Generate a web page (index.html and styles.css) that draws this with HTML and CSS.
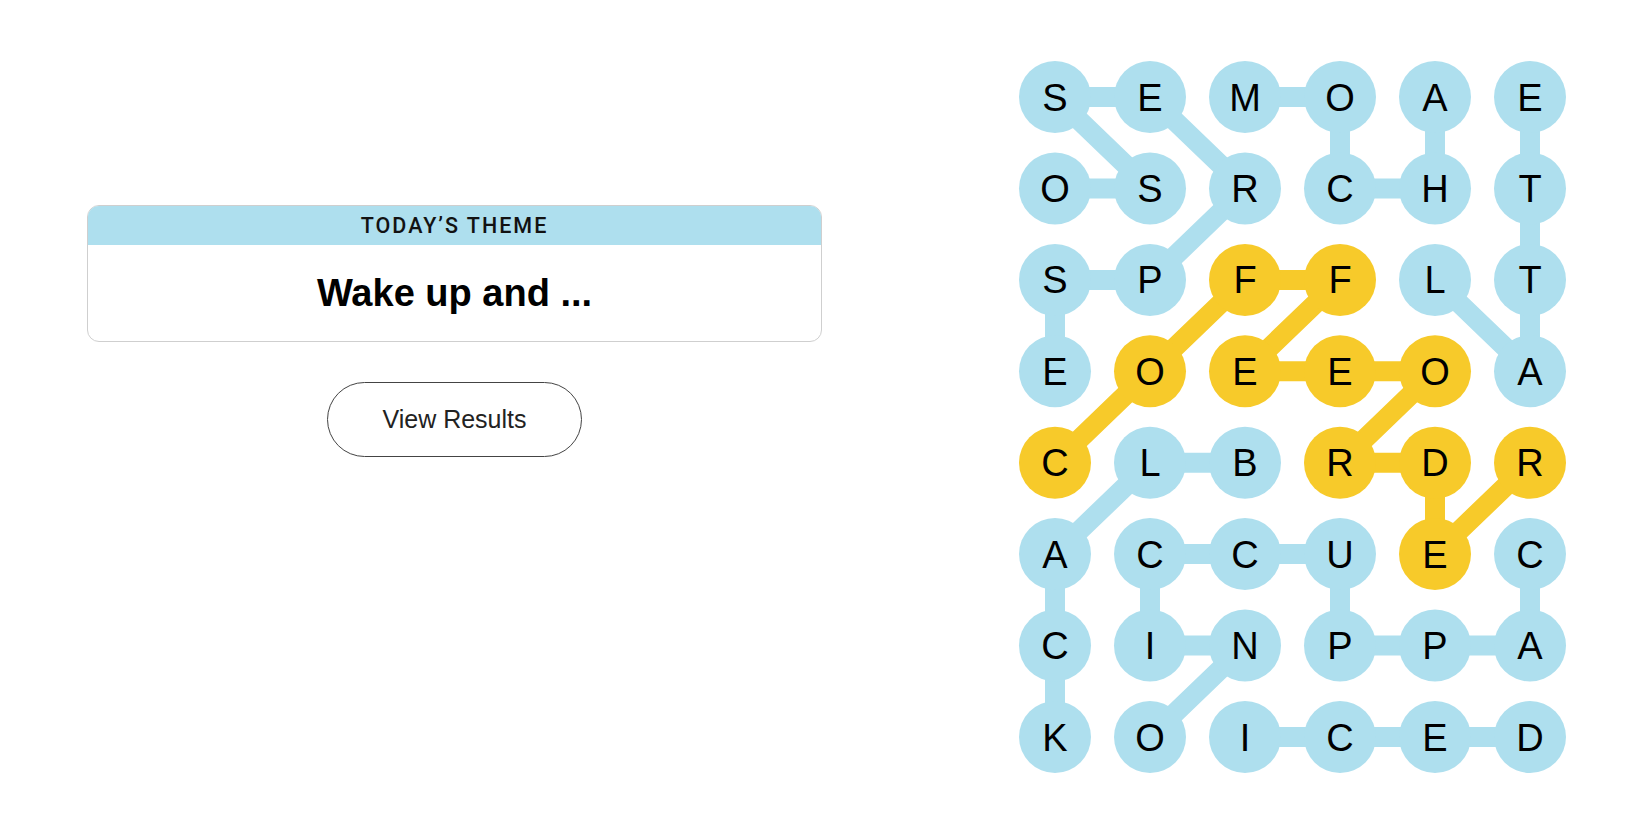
FILE: index.html
```html
<!DOCTYPE html>
<html lang="en">
<head>
<meta charset="utf-8">
<title>Strands</title>
<link rel="stylesheet" href="styles.css">
</head>
<body>
<main class="page">
  <section class="left">
    <div class="theme-card">
      <div class="theme-head">TODAY’S THEME</div>
      <div class="theme-body">Wake up and ...</div>
    </div>
    <button class="results-btn" type="button">View Results</button>
  </section>
  <section class="right">
    <svg class="board" width="560" height="720" viewBox="0 0 560 720" xmlns="http://www.w3.org/2000/svg">
      <g class="links blue">
        <polyline points="40,314.3 40,222.9 135,222.9 230,131.4 135,40 40,40 135,131.4 40,131.4"/>
        <polyline points="230,40 325,40 325,131.4 420,131.4 420,40"/>
        <polyline points="420,222.9 515,314.3 515,222.9 515,131.4 515,40"/>
        <polyline points="230,405.7 135,405.7 40,497.1 40,588.6 40,680"/>
        <polyline points="515,497.1 515,588.6 420,588.6 325,588.6 325,497.1 230,497.1 135,497.1 135,588.6 230,588.6 135,680"/>
        <polyline points="230,680 325,680 420,680 515,680"/>
      </g>
      <g class="links gold">
        <polyline points="40,405.7 135,314.3 230,222.9 325,222.9 230,314.3 325,314.3 420,314.3 325,405.7 420,405.7 420,497.1 515,405.7"/>
      </g>
      <g class="dots">
        <circle class="b" cx="40" cy="40" r="36"/><circle class="b" cx="135" cy="40" r="36"/><circle class="b" cx="230" cy="40" r="36"/><circle class="b" cx="325" cy="40" r="36"/><circle class="b" cx="420" cy="40" r="36"/><circle class="b" cx="515" cy="40" r="36"/>
        <circle class="b" cx="40" cy="131.4" r="36"/><circle class="b" cx="135" cy="131.4" r="36"/><circle class="b" cx="230" cy="131.4" r="36"/><circle class="b" cx="325" cy="131.4" r="36"/><circle class="b" cx="420" cy="131.4" r="36"/><circle class="b" cx="515" cy="131.4" r="36"/>
        <circle class="b" cx="40" cy="222.9" r="36"/><circle class="b" cx="135" cy="222.9" r="36"/><circle class="y" cx="230" cy="222.9" r="36"/><circle class="y" cx="325" cy="222.9" r="36"/><circle class="b" cx="420" cy="222.9" r="36"/><circle class="b" cx="515" cy="222.9" r="36"/>
        <circle class="b" cx="40" cy="314.3" r="36"/><circle class="y" cx="135" cy="314.3" r="36"/><circle class="y" cx="230" cy="314.3" r="36"/><circle class="y" cx="325" cy="314.3" r="36"/><circle class="y" cx="420" cy="314.3" r="36"/><circle class="b" cx="515" cy="314.3" r="36"/>
        <circle class="y" cx="40" cy="405.7" r="36"/><circle class="b" cx="135" cy="405.7" r="36"/><circle class="b" cx="230" cy="405.7" r="36"/><circle class="y" cx="325" cy="405.7" r="36"/><circle class="y" cx="420" cy="405.7" r="36"/><circle class="y" cx="515" cy="405.7" r="36"/>
        <circle class="b" cx="40" cy="497.1" r="36"/><circle class="b" cx="135" cy="497.1" r="36"/><circle class="b" cx="230" cy="497.1" r="36"/><circle class="b" cx="325" cy="497.1" r="36"/><circle class="y" cx="420" cy="497.1" r="36"/><circle class="b" cx="515" cy="497.1" r="36"/>
        <circle class="b" cx="40" cy="588.6" r="36"/><circle class="b" cx="135" cy="588.6" r="36"/><circle class="b" cx="230" cy="588.6" r="36"/><circle class="b" cx="325" cy="588.6" r="36"/><circle class="b" cx="420" cy="588.6" r="36"/><circle class="b" cx="515" cy="588.6" r="36"/>
        <circle class="b" cx="40" cy="680" r="36"/><circle class="b" cx="135" cy="680" r="36"/><circle class="b" cx="230" cy="680" r="36"/><circle class="b" cx="325" cy="680" r="36"/><circle class="b" cx="420" cy="680" r="36"/><circle class="b" cx="515" cy="680" r="36"/>
      </g>
      <g class="letters">
        <text x="40" y="53.5">S</text><text x="135" y="53.5">E</text><text x="230" y="53.5">M</text><text x="325" y="53.5">O</text><text x="420" y="53.5">A</text><text x="515" y="53.5">E</text>
        <text x="40" y="144.9">O</text><text x="135" y="144.9">S</text><text x="230" y="144.9">R</text><text x="325" y="144.9">C</text><text x="420" y="144.9">H</text><text x="515" y="144.9">T</text>
        <text x="40" y="236.4">S</text><text x="135" y="236.4">P</text><text x="230" y="236.4">F</text><text x="325" y="236.4">F</text><text x="420" y="236.4">L</text><text x="515" y="236.4">T</text>
        <text x="40" y="327.8">E</text><text x="135" y="327.8">O</text><text x="230" y="327.8">E</text><text x="325" y="327.8">E</text><text x="420" y="327.8">O</text><text x="515" y="327.8">A</text>
        <text x="40" y="419.2">C</text><text x="135" y="419.2">L</text><text x="230" y="419.2">B</text><text x="325" y="419.2">R</text><text x="420" y="419.2">D</text><text x="515" y="419.2">R</text>
        <text x="40" y="510.6">A</text><text x="135" y="510.6">C</text><text x="230" y="510.6">C</text><text x="325" y="510.6">U</text><text x="420" y="510.6">E</text><text x="515" y="510.6">C</text>
        <text x="40" y="602.1">C</text><text x="135" y="602.1">I</text><text x="230" y="602.1">N</text><text x="325" y="602.1">P</text><text x="420" y="602.1">P</text><text x="515" y="602.1">A</text>
        <text x="40" y="693.5">K</text><text x="135" y="693.5">O</text><text x="230" y="693.5">I</text><text x="325" y="693.5">C</text><text x="420" y="693.5">E</text><text x="515" y="693.5">D</text>
      </g>
    </svg>
  </section>
</main>
</body>
</html>
```

FILE: styles.css
```css
html, body {
  margin: 0;
  padding: 0;
  background: #ffffff;
}

body {
  width: 1650px;
  height: 825px;
  overflow: hidden;
  font-family: "Liberation Sans", Arial, sans-serif;
  color: #000;
}

.page {
  display: grid;
  grid-template-columns: 909px 560px;
  column-gap: 106px;
  align-items: start;
}

.left {
  padding-top: 205px;
  display: flex;
  flex-direction: column;
  align-items: center;
}

.theme-card {
  width: 735px;
  box-sizing: border-box;
  border: 1px solid #cfcfcf;
  border-radius: 12px;
  overflow: hidden;
  background: #fff;
}

.theme-head {
  height: 39px;
  background: #aedfee;
  display: flex;
  align-items: center;
  justify-content: center;
  font-family: "Roboto", "Liberation Sans", sans-serif;
  font-weight: 500;
  font-size: 21.5px;
  letter-spacing: 2px;
  color: #121212;
}

.theme-body {
  height: 96px;
  display: flex;
  align-items: center;
  justify-content: center;
  font-family: "Liberation Sans", Arial, sans-serif;
  font-weight: 700;
  font-size: 38px;
  color: #000;
}

.results-btn {
  margin-top: 40px;
  width: 255px;
  height: 75px;
  box-sizing: border-box;
  border: 1px solid #444;
  border-radius: 38px;
  background: #fff;
  font-family: "Liberation Sans", Arial, sans-serif;
  font-size: 25px;
  color: #222;
  padding: 0;
  cursor: pointer;
}

.right {
  padding-top: 57px;
}

.board {
  display: block;
}

.links polyline {
  fill: none;
  stroke-width: 20;
  stroke-linecap: round;
  stroke-linejoin: round;
}

.links.blue polyline {
  stroke: #aedfee;
}

.links.gold polyline {
  stroke: #f7ca2a;
}

.dots .b {
  fill: #aedfee;
}

.dots .y {
  fill: #f7ca2a;
}

.letters text {
  font-family: "Liberation Sans", Arial, sans-serif;
  font-size: 38px;
  fill: #000;
  text-anchor: middle;
}
```
